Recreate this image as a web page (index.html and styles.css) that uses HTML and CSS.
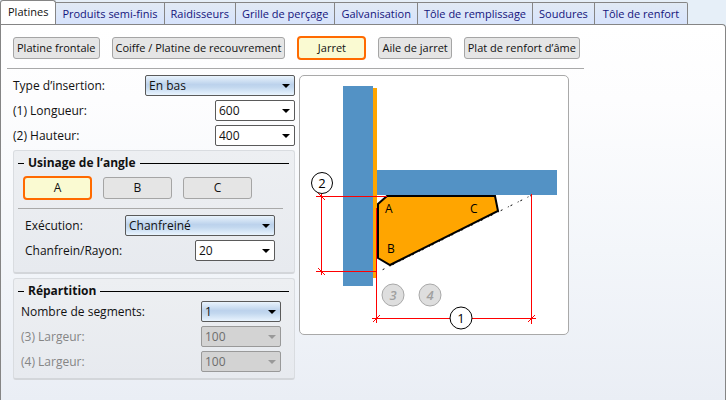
FILE: index.html
```html
<!DOCTYPE html>
<html lang="fr">

<head>
  <meta charset="UTF-8">
  <meta name="viewport" content="width=device-width, initial-scale=1.0">
  <title>Platines - Jarret</title>
  <link rel="stylesheet" href="styles.css">
</head>

<body>
  <nav class="tabs" role="tablist">
    <button class="tab tab-active" role="tab" aria-selected="true">Platines</button>
    <button class="tab" role="tab">Produits semi-finis</button>
    <button class="tab" role="tab">Raidisseurs</button>
    <button class="tab" role="tab">Grille de perçage</button>
    <button class="tab" role="tab">Galvanisation</button>
    <button class="tab" role="tab">Tôle de remplissage</button>
    <button class="tab" role="tab">Soudures</button>
    <button class="tab" role="tab">Tôle de renfort</button>
  </nav>
  <main class="panel">
    <div class="toolbar">
      <button class="btn">Platine frontale</button>
      <button class="btn">Coiffe / Platine de recouvrement</button>
      <button class="btn btn-wide btn-active">Jarret</button>
      <button class="btn">Aile de jarret</button>
      <button class="btn">Plat de renfort d’âme</button>
    </div>
    <div class="content">
      <form class="form">
        <div class="row">
          <label for="insertion">Type d’insertion:</label>
          <select class="combo combo-list combo-large" id="insertion">
            <option>En bas</option>
          </select>
        </div>
        <div class="row">
          <label for="longueur">(1) Longueur:</label>
          <select class="combo" id="longueur">
            <option>600</option>
          </select>
        </div>
        <div class="row">
          <label for="hauteur">(2) Hauteur:</label>
          <select class="combo" id="hauteur">
            <option>400</option>
          </select>
        </div>

        <section class="group">
          <h2 class="group-title">Usinage de l’angle</h2>
          <div class="corners">
            <button type="button" class="btn btn-wide btn-active">A</button>
            <button type="button" class="btn btn-wide">B</button>
            <button type="button" class="btn btn-wide">C</button>
          </div>
          <div class="fields fields-corner">
            <div class="row">
              <label for="execution">Exécution:</label>
              <select class="combo combo-list combo-large" id="execution">
                <option>Chanfreiné</option>
              </select>
            </div>
            <div class="row">
              <label for="rayon">Chanfrein/Rayon:</label>
              <select class="combo" id="rayon">
                <option>20</option>
              </select>
            </div>
          </div>
        </section>

        <section class="group">
          <h2 class="group-title">Répartition</h2>
          <div class="fields">
            <div class="row">
              <label for="segments">Nombre de segments:</label>
              <select class="combo combo-list" id="segments">
                <option>1</option>
              </select>
            </div>
            <div class="row row-disabled">
              <label for="largeur3">(3) Largeur:</label>
              <select class="combo" id="largeur3" disabled>
                <option>100</option>
              </select>
            </div>
            <div class="row row-disabled">
              <label for="largeur4">(4) Largeur:</label>
              <select class="combo" id="largeur4" disabled>
                <option>100</option>
              </select>
            </div>
          </div>
        </section>
      </form>

      <figure class="drawing">
        <svg viewBox="0 0 268 258" role="img" aria-label="Jarret">
          <!-- poteau, platine, poutre -->
          <rect class="steel" x="43" y="10" width="30" height="200" />
          <rect class="plate" x="73" y="12" width="4" height="190" />
          <rect class="steel" x="77" y="94" width="180" height="25" />
          <!-- jarret -->
          <path class="guide" d="M232 119L82 194" />
          <path class="haunch" d="M78 182V128L87 120H195L198 135L90 189Z" />
          <text x="85" y="137">A</text>
          <text x="87" y="177">B</text>
          <text x="170" y="137">C</text>
          <!-- cotes -->
          <path class="dim" d="M16 120.500H87M16 195.500H77M21.500 118V199M76.500 132V247M231.500 118V248M72 242.500H236" />
          <path class="dim" d="M18 117L25 124M18 192L25 199M73 246L80 239M228 246L235 239" />
          <circle class="mark" cx="22" cy="107" r="10.500" />
          <text class="mark-text" x="22" y="112">2</text>
          <circle class="mark" cx="161" cy="242" r="11" />
          <text class="mark-text" x="161" y="247">1</text>
          <circle class="mark-off" cx="93" cy="219" r="11" />
          <text class="mark-text mark-text-off" x="93" y="224">3</text>
          <circle class="mark-off" cx="130" cy="219" r="11" />
          <text class="mark-text mark-text-off" x="130" y="224">4</text>
        </svg>
      </figure>
    </div>
  </main>
</body>

</html>
```
FILE: styles.css
```css
* {
  box-sizing: border-box;
  margin: 0;
  padding: 0;
}

body {
  display: flex;
  flex-direction: column;
  min-height: 100vh;
  background: #e6eff8;
  color: #111;
  font: 12px/16px "Open Sans", "Noto Sans", sans-serif;
}

button,
select {
  font: inherit;
  color: inherit;
}

/* onglets */
.tabs {
  display: flex;
  align-items: flex-end;
  height: 25px;
  margin-bottom: -1px;
  font-size: 11px;
}

.tab {
  height: 23px;
  padding: 0 6px;
  border: 1px solid #858585;
  border-left: none;
  background: linear-gradient(#e1eaf5, #d7e3fc);
  color: #14147c;
  white-space: nowrap;
}

.tab-active {
  height: 25px;
  padding: 0 7px 2px;
  border-left: 1px solid #858585;
  border-bottom: none;
  border-radius: 3px 3px 0 0;
  background: #fff;
  color: #111;
}

.tab:last-child {
  padding: 0 8px;
  border-top-right-radius: 2px;
}

.panel {
  flex: 1;
  padding: 11px 0 20px;
  border: 1px solid #858585;
  border-bottom: none;
  border-top-right-radius: 4px;
  background: linear-gradient(#fff, #fdfdfe 20%, #f3f6fa 60%, #eaeef5);
}

/* boutons */
.toolbar {
  display: flex;
  align-items: center;
  gap: 12px;
  width: 577px;
  margin-left: 6px;
  padding: 0 0 8px 6px;
  border-bottom: 1px solid #a9a9a9;
  font-size: 11px;
}

.btn {
  flex: none;
  height: 22px;
  padding: 0 3px;
  border: 1px solid #a5a5a5;
  border-radius: 3px;
  background: #e5e5e5;
  white-space: nowrap;
}

.btn-wide {
  width: 69px;
}

.btn-active {
  height: 24px;
  border: 2px solid #ff6a00;
  border-radius: 4px;
  background: #fafad2;
}

.content {
  display: flex;
  align-items: flex-start;
  gap: 4px;
  padding: 6px 12px 0;
}

/* formulaire */
.form {
  display: flex;
  flex-direction: column;
  gap: 4px;
  width: 282px;
}

.row {
  display: flex;
  align-items: center;
  justify-content: space-between;
}

.row-disabled {
  color: #858585;
}

.combo {
  width: 80px;
  height: 21px;
  padding: 0 3px;
  appearance: none;
  border: 1px solid #5a5a5a;
  border-radius: 2px;
  background: url("data:image/svg+xml,%3Csvg xmlns='http://www.w3.org/2000/svg' width='8' height='4'%3E%3Cpath d='M0 0h8L4 4z'/%3E%3C/svg%3E") no-repeat right 4px center #fff;
}

.combo-list {
  background-image: url("data:image/svg+xml,%3Csvg xmlns='http://www.w3.org/2000/svg' width='8' height='4'%3E%3Cpath d='M0 0h8L4 4z'/%3E%3C/svg%3E"), linear-gradient(#e9f3fc, #bcd2ec 45%, #c3d8ef 60%, #e9f4fe);
  background-position: right 4px center, 0 0;
}

.combo-large {
  width: 150px;
}

.combo:disabled {
  border-color: #999;
  background-color: #d3d3d3;
  background-image: url("data:image/svg+xml,%3Csvg xmlns='http://www.w3.org/2000/svg' width='8' height='4'%3E%3Cpath fill='%23999' d='M0 0h8L4 4z'/%3E%3C/svg%3E");
  color: #6d6d6d;
  opacity: 1;
}

/* groupes */
.group {
  padding: 4px 5px 6px 4px;
  border: 1px solid #d9dce0;
  border-bottom: 2px solid #d3d6da;
  border-radius: 3px;
  background: linear-gradient(#edeff2, #e7eaef);
}

.group-title {
  display: flex;
  align-items: center;
  gap: 4px;
  font-size: 12px;
  font-weight: 700;
  line-height: 16px;
}

.group-title::before,
.group-title::after {
  content: "";
  width: 6px;
  height: 1px;
  background: #000;
}

.group-title::after {
  flex: 1;
}

.corners {
  display: flex;
  align-items: center;
  gap: 11px;
  margin-right: 6px;
  padding: 5px 5px 8px;
  border-bottom: 1px solid #a9a9a9;
}

.fields {
  display: flex;
  flex-direction: column;
  gap: 4px;
  padding: 2px 8px 0 3px;
}

.fields-corner {
  padding: 6px 14px 5px 7px;
}

/* schéma */
.drawing {
  flex: 0 1 270px;
  border: 1px solid #a9a9a9;
  border-radius: 5px;
  background: #fff;
}

.drawing svg {
  display: block;
  width: 100%;
}

.steel {
  fill: #5392c5;
}

.plate {
  fill: #ffa500;
}

.haunch {
  fill: #ffa500;
  stroke: #000;
  stroke-width: 2;
}

.guide {
  fill: none;
  stroke: #000;
  stroke-dasharray: 2 2 1 6;
}

.dim {
  fill: none;
  stroke: #f00;
}

.mark {
  fill: #fff;
  stroke: #000;
}

.mark-off {
  fill: #dedede;
  stroke: #a9a9a9;
}

.mark-text {
  font-size: 13px;
  text-anchor: middle;
}

.mark-text-off {
  fill: #a0a0a0;
  font-style: italic;
  font-weight: 600;
}
```
